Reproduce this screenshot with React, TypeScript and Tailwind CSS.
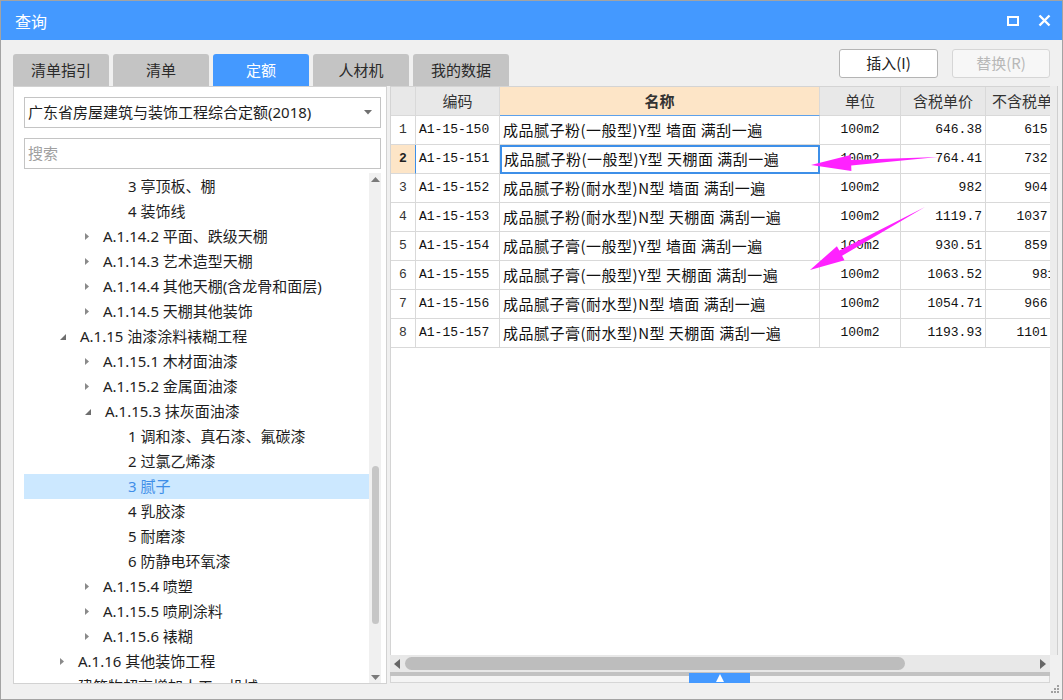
import React from "react";

const UI = { fontFamily: '"Noto Sans", "Noto Sans CJK SC", sans-serif' };
const CJK = { fontFamily: '"Noto Sans CJK SC", "Noto Sans", sans-serif' };
const MONO = { fontFamily: '"Liberation Mono", "Noto Sans CJK SC", monospace' };

type TreeRow = { level: 1 | 2 | 3; text: string; arrow?: "right" | "down"; selected?: boolean };

const tree: TreeRow[] = [
  { level: 3, text: "3 亭顶板、棚" },
  { level: 3, text: "4 装饰线" },
  { level: 2, text: "A.1.14.2 平面、跌级天棚", arrow: "right" },
  { level: 2, text: "A.1.14.3 艺术造型天棚", arrow: "right" },
  { level: 2, text: "A.1.14.4 其他天棚(含龙骨和面层)", arrow: "right" },
  { level: 2, text: "A.1.14.5 天棚其他装饰", arrow: "right" },
  { level: 1, text: "A.1.15 油漆涂料裱糊工程", arrow: "down" },
  { level: 2, text: "A.1.15.1 木材面油漆", arrow: "right" },
  { level: 2, text: "A.1.15.2 金属面油漆", arrow: "right" },
  { level: 2, text: "A.1.15.3 抹灰面油漆", arrow: "down" },
  { level: 3, text: "1 调和漆、真石漆、氟碳漆" },
  { level: 3, text: "2 过氯乙烯漆" },
  { level: 3, text: "3 腻子", selected: true },
  { level: 3, text: "4 乳胶漆" },
  { level: 3, text: "5 耐磨漆" },
  { level: 3, text: "6 防静电环氧漆" },
  { level: 2, text: "A.1.15.4 喷塑", arrow: "right" },
  { level: 2, text: "A.1.15.5 喷刷涂料", arrow: "right" },
  { level: 2, text: "A.1.15.6 裱糊", arrow: "right" },
  { level: 1, text: "A.1.16 其他装饰工程", arrow: "right" },
  { level: 1, text: "建筑物超高增加人工、机械", arrow: "right" },
];

const rows = [
  ["A1-15-150", "成品腻子粉(一般型)Y型 墙面 满刮一遍", "100m2", "646.38", "615.62"],
  ["A1-15-151", "成品腻子粉(一般型)Y型 天棚面 满刮一遍", "100m2", "764.41", "732.45"],
  ["A1-15-152", "成品腻子粉(耐水型)N型 墙面 满刮一遍", "100m2", "982", "904.36"],
  ["A1-15-153", "成品腻子粉(耐水型)N型 天棚面 满刮一遍", "100m2", "1119.7", "1037.11"],
  ["A1-15-154", "成品腻子膏(一般型)Y型 墙面 满刮一遍", "100m2", "930.51", "859.55"],
  ["A1-15-155", "成品腻子膏(一般型)Y型 天棚面 满刮一遍", "100m2", "1063.52", "981.2"],
  ["A1-15-156", "成品腻子膏(耐水型)N型 墙面 满刮一遍", "100m2", "1054.71", "966.82"],
  ["A1-15-157", "成品腻子膏(耐水型)N型 天棚面 满刮一遍", "100m2", "1193.93", "1101.41"],
];

function Arrow({ dir }: { dir: "right" | "down" }) {
  if (dir === "right")
    return (
      <svg width="6" height="9" viewBox="0 0 6 9" className="shrink-0">
        <path d="M1 1 L5 4.5 L1 8 Z" fill="#8a8a8a" />
      </svg>
    );
  return (
    <svg width="8" height="8" viewBox="0 0 8 8" className="shrink-0">
      <path d="M7 1 L7 7 L1 7 Z" fill="#6e6e6e" />
    </svg>
  );
}

function TreeItem({ r }: { r: TreeRow }) {
  const pad = r.level === 3 ? "pl-[104px]" : r.level === 1 ? "pl-[35px]" : "pl-[60px]";
  return (
    <div
      className={`h-[25px] flex items-center text-[15px] whitespace-nowrap ${
        r.selected ? "bg-[#cce8ff] text-[#3f8ee8]" : "text-[#1e1e1e]"
      } ${pad}`}
      style={UI}
    >
      {r.level !== 3 && r.arrow && <Arrow dir={r.arrow} />}
      <span className={r.level !== 3 ? "ml-[13px]" : ""}>{r.text}</span>
    </div>
  );
}

const cell = "border-r border-b border-[#d9d9d9] h-[29px] flex items-center overflow-hidden whitespace-nowrap";

export default function App() {
  return (
    <div className="w-[1063px] h-[700px] border border-[#a3a3a3] bg-[#f0f0f0] flex flex-col relative overflow-hidden" style={UI}>
      {/* title bar */}
      <div className="h-[39px] bg-[#4499ff] flex items-center justify-between pl-[14px] pr-[11px] shrink-0">
        <span className="text-white text-[16px]" style={CJK}>查询</span>
        <div className="flex items-center gap-[19px]">
          <svg width="12" height="10" viewBox="0 0 12 10">
            <rect x="1" y="1" width="10" height="8" fill="none" stroke="white" strokeWidth="2" />
          </svg>
          <svg width="13" height="13" viewBox="0 0 13 13">
            <path d="M1.5 1.5 L11.5 11.5 M11.5 1.5 L1.5 11.5" stroke="white" strokeWidth="2.4" />
          </svg>
        </div>
      </div>

      {/* tabs + buttons */}
      <div className="h-[46px] flex items-end justify-between pl-[12px] pr-[12px] shrink-0">
        <div className="flex gap-[4px]">
          {["清单指引", "清单", "定额", "人材机", "我的数据"].map((t, i) => (
            <div
              key={t}
              className={`w-[96px] h-[32px] rounded-t-[3px] flex items-center justify-center text-[15px] ${
                i === 2 ? "bg-[#4499ff] text-white" : "bg-[#c4c4c4] text-[#2a2a2a]"
              }`}
              style={CJK}
            >
              {t}
            </div>
          ))}
        </div>
        <div className="flex gap-[14px] self-start mt-[9px]">
          <div className="w-[99px] h-[29px] bg-white border border-[#b4b4b4] rounded-[3px] flex items-center justify-center text-[15px] text-[#222]" style={CJK}>
            插入(I)
          </div>
          <div className="w-[98px] h-[29px] bg-[#f7f7f7] border border-[#d6d6d6] rounded-[3px] flex items-center justify-center text-[15px] text-[#b8b8b8]" style={CJK}>
            替换(R)
          </div>
        </div>
      </div>

      {/* main */}
      <div className="h-[598px] flex pl-[12px] shrink-0">
        {/* left panel */}
        <div className="w-[374px] h-[598px] bg-white border border-[#d2d2d2] flex flex-col pl-[10px] pr-[4px] pt-[10px]">
          <div className="h-[31px] w-[357px] border border-[#c4c4c4] flex items-center justify-between pl-[3px] pr-[8px] shrink-0">
            <span className="text-[15px] text-[#1e1e1e]" style={UI}>广东省房屋建筑与装饰工程综合定额(2018)</span>
            <svg width="8" height="5" viewBox="0 0 8 5">
              <path d="M0 0 L8 0 L4 4.5 Z" fill="#707070" />
            </svg>
          </div>
          <div className="h-[31px] w-[357px] border border-[#c4c4c4] flex items-center pl-[3px] mt-[10px] shrink-0">
            <span className="text-[15px] text-[#a0a0a0]" style={CJK}>搜索</span>
          </div>
          <div className="flex mt-[4px] h-[510px] w-[357px]">
            <div className="w-[345px] overflow-hidden pt-[1px]">
              {tree.map((r, i) => (
                <TreeItem key={i} r={r} />
              ))}
            </div>
            <div className="w-[12px] bg-[#f0f0f0] flex flex-col items-center pt-[4px] pb-[3px]">
              <svg width="9" height="5" viewBox="0 0 9 5">
                <path d="M0 5 L4.5 0 L9 5 Z" fill="#7a7a7a" />
              </svg>
              <div className="flex-1 w-full flex flex-col items-center">
                <div className="h-[284px]" />
                <div className="w-[7px] h-[158px] rounded-full bg-[#c6c6c6]" />
              </div>
              <svg width="9" height="5" viewBox="0 0 9 5">
                <path d="M0 0 L9 0 L4.5 5 Z" fill="#7a7a7a" />
              </svg>
            </div>
          </div>
        </div>

        {/* right panel */}
        <div className="ml-[3px] w-[668px] h-[597px] flex flex-col">
          <div className="flex h-[569px]">
            <div className="w-[660px] h-full bg-white border-l border-t border-[#d4d4d4] overflow-hidden">
              <div className="grid grid-cols-[25px_84px_320px_81px_85px_90px] w-[685px]">
                {/* header */}
                <div className={`${cell} bg-[#e8e8e8]`} />
                <div className={`${cell} bg-[#e8e8e8] justify-center text-[15px] text-[#333]`} style={CJK}>编码</div>
                <div className={`${cell} bg-[#fde5c7] justify-center text-[15px] font-bold text-[#333] !border-b-[#5ea1ea]`} style={CJK}>名称</div>
                <div className={`${cell} bg-[#e8e8e8] justify-center text-[15px] text-[#333]`} style={CJK}>单位</div>
                <div className={`${cell} bg-[#e8e8e8] justify-center text-[15px] text-[#333]`} style={CJK}>含税单价</div>
                <div className={`${cell} bg-[#e8e8e8] pl-[6px] text-[15px] text-[#333]`} style={CJK}>不含税单价</div>
                {rows.map((r, i) => {
                  const sel = i === 1;
                  return (
                    <React.Fragment key={i}>
                      <div
                        className={`${cell} justify-center text-[13px] ${
                          sel ? "bg-[#fde5c7] font-bold text-[#222] !border-r-[#3d8fe8]" : "bg-white text-[#333]"
                        }`}
                        style={MONO}
                      >
                        {i + 1}
                      </div>
                      <div className={`${cell} pl-[3px] text-[13px] text-[#111]`} style={MONO}>{r[0]}</div>
                      <div
                        className={`${cell} text-[15px] tracking-[0.5px] text-[#111] ${
                          sel ? "!border-2 !border-[#3d8fe8] pl-[2px]" : "pl-[3px]"
                        }`}
                        style={CJK}
                      >
                        {r[1]}
                      </div>
                      <div className={`${cell} justify-center text-[13px] text-[#111]`} style={MONO}>{r[2]}</div>
                      <div className={`${cell} justify-end pr-[3px] text-[13px] text-[#111]`} style={MONO}>{r[3]}</div>
                      <div className={`${cell} justify-end pr-[4px] text-[13px] text-[#111]`} style={MONO}>{r[4]}</div>
                    </React.Fragment>
                  );
                })}
              </div>
            </div>
            <div className="w-[8px] h-full bg-[#ececec] border-r border-[#cfcfcf]" />
          </div>
          {/* horizontal scroll */}
          <div className="h-[17px] w-[660px] bg-[#e8e8e8] flex items-center px-[4px] gap-[5px]">
            <svg width="6" height="10" viewBox="0 0 6 10">
              <path d="M6 0 L6 10 L0 5 Z" fill="#666" />
            </svg>
            <div className="w-[500px] h-[13px] rounded-full bg-[#bdbdbd]" />
            <div className="flex-1" />
            <svg width="6" height="10" viewBox="0 0 6 10">
              <path d="M0 0 L0 10 L6 5 Z" fill="#666" />
            </svg>
          </div>
          <div className="h-[4px] w-[660px] bg-[#c2c2c2]" />
          <div className="h-[7px] w-[660px] bg-[#f4f4f4] border-b border-l border-r border-[#d6d6d6]" />
        </div>
      </div>

      {/* splitter handle */}
      <div className="absolute left-[688px] top-[672px] w-[61px] h-[10px] bg-[#4499ff] flex items-center justify-center">
        <svg width="8" height="8" viewBox="0 0 8 8">
          <path d="M4 0 L8 8 L0 8 Z" fill="white" />
        </svg>
      </div>

      {/* resize grip */}
      <svg className="absolute left-[1049px] top-[683px]" width="10" height="10" viewBox="0 0 10 10">
        <rect x="7" y="1" width="2" height="2" fill="#a0a0a0" />
        <rect x="4" y="4" width="2" height="2" fill="#a0a0a0" />
        <rect x="7" y="4" width="2" height="2" fill="#a0a0a0" />
        <rect x="1" y="7" width="2" height="2" fill="#a0a0a0" />
        <rect x="4" y="7" width="2" height="2" fill="#a0a0a0" />
        <rect x="7" y="7" width="2" height="2" fill="#a0a0a0" />
      </svg>

      {/* annotation arrows */}
      <svg className="absolute left-0 top-0 pointer-events-none" width="1063" height="700" viewBox="-1 -1 1063 700">
        <polygon points="809,163 848.6,153 848.8,158 936,155 849.2,163.5 849.4,169" fill="#ff22ff" />
        <polygon points="808,268 834.9,244.2 837.3,248.6 923,205 840.1,253.8 842.5,258.2" fill="#ff22ff" />
      </svg>
    </div>
  );
}
